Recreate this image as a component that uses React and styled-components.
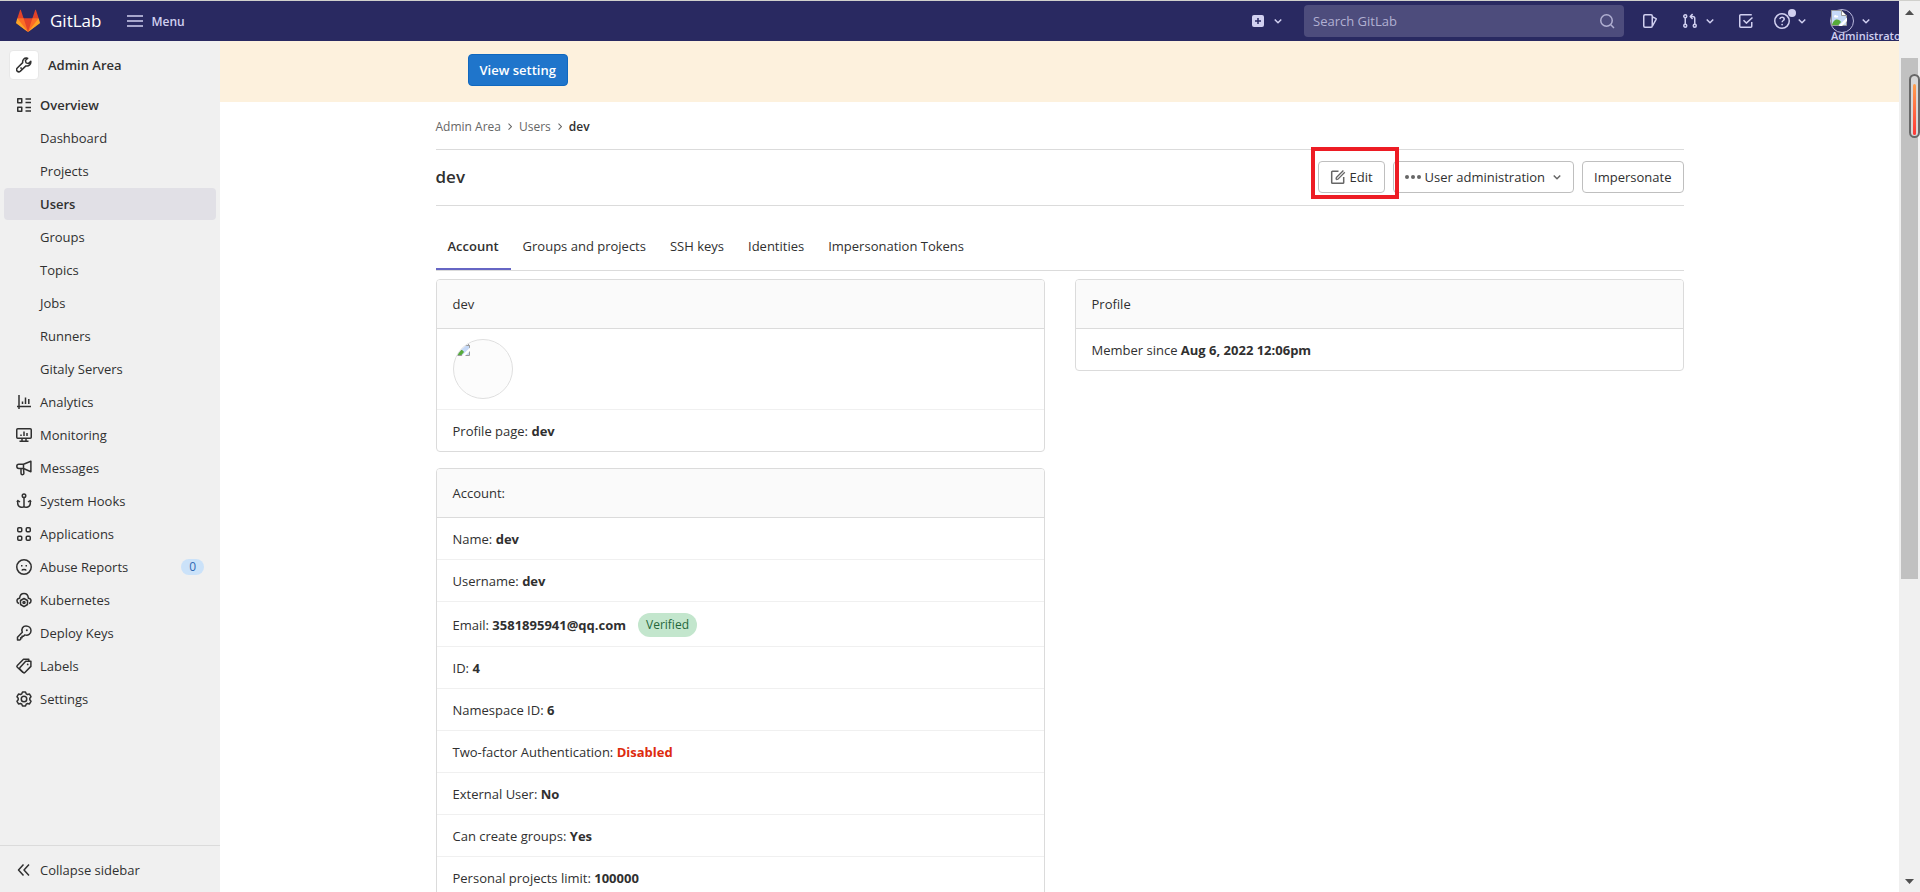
import styled, { createGlobalStyle, css } from 'styled-components';

const GlobalStyle = createGlobalStyle`
	* {
		box-sizing: border-box;
	}

	body {
		margin: 0;
		background: #fff;
		color: #303030;
		font-family: 'Open Sans', 'Noto Sans', sans-serif;
		font-size: 13px;
		line-height: 17px;
	}

	a {
		color: inherit;
		text-decoration: none;
	}

	button, input {
		font: inherit;
	}
`;

const Shell = styled.div`
	display: grid;
	grid-template-columns: minmax(0, 1fr) 21px;
	height: 100vh;
	border-top: 1px solid #d0d0cc;
	overflow: hidden;
`;

const Page = styled.div`
	display: flex;
	flex-direction: column;
	min-height: 0;
`;

const TopBar = styled.header`
	flex: none;
	display: flex;
	align-items: center;
	gap: 18px;
	height: 40px;
	padding: 0 25px 0 16px;
	background: #292961;
	color: #d1d0f0;
	overflow: hidden;
`;

const Brand = styled.a`
	display: flex;
	align-items: center;
	gap: 10px;
	color: #fff;
	font-size: 17px;
	line-height: 24px;
`;

const plainButton = css`
	padding: 0;
	border: none;
	background: transparent;
	color: inherit;
	cursor: pointer;
`;

const MenuButton = styled.button`
	${plainButton}
	display: flex;
	align-items: center;
	gap: 8px;
	margin: 0 auto 0 8px;
	font-size: 12px;
	font-weight: 600;
`;

const NavButton = styled.button`
	${plainButton}
	position: relative;
	display: flex;
	align-items: center;
	gap: 4px;
`;

const NavLink = styled.a`
	display: flex;
`;

const NavCluster = styled.nav`
	display: flex;
	align-items: center;
	gap: ${({ $gap }) => $gap}px;
`;

const SearchBox = styled.label`
	display: flex;
	align-items: center;
	flex: 0 1 320px;
	height: 32px;
	padding: 0 9px;
	border-radius: 4px;
	background: #4d4c7c;
	color: #b1b0d2;
`;

const SearchInput = styled.input`
	flex: 1;
	min-width: 0;
	padding: 0;
	border: none;
	outline: none;
	background: transparent;
	color: #fff;

	&::placeholder {
		color: #b1b0d2;
		opacity: 1;
	}
`;

const NoticeDot = styled.span`
	position: absolute;
	top: -4px;
	left: 14px;
	width: 8px;
	height: 8px;
	border-radius: 50%;
	background: #d1d0f0;
`;

const SmallAvatar = styled.span`
	display: flex;
	width: 24px;
	height: 24px;
	border: 1px solid #b9b8dc;
	border-radius: 50%;
`;

const AvatarAlt = styled.span`
	position: absolute;
	top: 18px;
	left: 1px;
	font-size: 11px;
	font-weight: 600;
`;

const Body = styled.div`
	flex: 1;
	display: flex;
	min-height: 0;
`;

const SidebarWrapper = styled.aside`
	flex: none;
	display: flex;
	flex-direction: column;
	justify-content: space-between;
	width: 220px;
	background: #f0f0f0;
`;

const SidebarTitle = styled.a`
	display: flex;
	align-items: center;
	gap: 9px;
	padding: 9px;
	font-weight: 600;
`;

const TitleIcon = styled.span`
	display: flex;
	align-items: center;
	justify-content: center;
	width: 30px;
	height: 30px;
	border: 1px solid #e8e8e8;
	border-radius: 4px;
	background: #fff;
`;

const NavList = styled.ul`
	display: flex;
	flex-direction: column;
	gap: 1px;
	margin: 0;
	padding: 0 4px;
	list-style: none;
`;

const NavItem = styled.a`
	display: flex;
	align-items: center;
	gap: 8px;
	height: 32px;
	padding: 0 12px 0 ${({ $sub }) => ($sub ? 36 : 12)}px;
	border-radius: 4px;
	background: ${({ $active }) => ($active ? '#e1e0e6' : 'transparent')};
	font-weight: ${({ $bold }) => ($bold ? 600 : 400)};
`;

const CountBadge = styled.span`
	margin-left: auto;
	padding: 0 8px;
	border-radius: 8px;
	background: #cbe2f9;
	color: #2f68b4;
	font-size: 12px;
	line-height: 16px;
`;

const CollapseButton = styled.button`
	${plainButton}
	display: flex;
	align-items: center;
	gap: 8px;
	height: 47px;
	padding: 2px 16px 0;
	border-top: 1px solid #dbdbdb;
`;

const Main = styled.main`
	flex: 1;
	min-width: 0;
	overflow: hidden;
`;

const Banner = styled.div`
	background: #fdf1dd;
`;

const Container = styled.div`
	max-width: 1280px;
	margin: 0 auto;
	padding: 0 16px;
`;

const BannerActions = styled.div`
	padding: 13px 32px 16px;
`;

const Button = styled.button`
	display: flex;
	align-items: center;
	gap: 4px;
	height: 32px;
	padding: 0 ${({ $caret }) => ($caret ? 8 : 11)}px 0 11px;
	border: 1px solid ${({ $primary }) => ($primary ? '#1068bf' : '#bfbfbf')};
	border-radius: 4px;
	background: ${({ $primary }) => ($primary ? '#1f75cb' : '#fff')};
	color: ${({ $primary }) => ($primary ? '#fff' : '#303030')};
	font-weight: ${({ $primary }) => ($primary ? 600 : 400)};
	white-space: nowrap;
	cursor: pointer;

	svg {
		color: #666;
	}
`;

const Breadcrumbs = styled.nav`
	display: flex;
	align-items: center;
	gap: 3px;
	padding: 17px 0 14px;
	border-bottom: 1px solid #dbdbdb;
	color: #666;
	font-size: 12px;
	line-height: 16px;
`;

const CurrentCrumb = styled.a`
	color: #303030;
	font-weight: 600;
`;

const TitleRow = styled.div`
	display: flex;
	align-items: center;
	justify-content: space-between;
	padding: 11px 0 12px;
	border-bottom: 1px solid #dbdbdb;
`;

const Title = styled.h1`
	margin: 0;
	font-size: 17px;
	line-height: 24px;
	font-weight: 600;
`;

const Actions = styled.div`
	display: flex;
	gap: 8px;
`;

const Marked = styled.div`
	position: relative;
`;

const RedFrame = styled.span`
	position: absolute;
	inset: -14px -14px -6px -7px;
	border: 4px solid #ed1c24;
	pointer-events: none;
	z-index: 1;
`;

const Tabs = styled.nav`
	display: flex;
	margin: 16px 0 8px;
	border-bottom: 1px solid #dbdbdb;
`;

const Tab = styled.a`
	display: flex;
	align-items: center;
	height: 48px;
	padding: 0 12px;
	font-weight: ${({ $active }) => ($active ? 600 : 400)};
	box-shadow: ${({ $active }) => ($active ? 'inset 0 -2px 0 #6666c4' : 'none')};
`;

const Columns = styled.div`
	display: grid;
	grid-template-columns: 1fr 1fr;
	gap: 30px;
`;

const Column = styled.div`
	display: flex;
	flex-direction: column;
	gap: 16px;
`;

const Card = styled.section`
	border: 1px solid #dbdbdb;
	border-radius: 4px;
	overflow: hidden;
`;

const CardHeader = styled.div`
	padding: 16px;
	border-bottom: 1px solid #dbdbdb;
	background: #fafafa;
	line-height: 16px;
`;

const CardRow = styled.div`
	display: flex;
	align-items: center;
	gap: 12px;
	padding: ${({ $media }) => ($media ? '10px 16px' : '13px 16px 11px')};

	& + & {
		border-top: 1px solid #f0f0f0;
	}
`;

const Value = styled.strong`
	color: ${({ $danger }) => ($danger ? '#dd2b0e' : 'inherit')};
	font-weight: 700;
`;

const Verified = styled.span`
	margin: -2px 0;
	padding: 4px 8px;
	border-radius: 12px;
	background: #c3e6cd;
	color: #24663b;
	font-size: 12px;
	line-height: 16px;
`;

const Avatar = styled.div`
	width: 60px;
	height: 60px;
	border: 1px solid #dfdfdf;
	border-radius: 50%;
	background: #fcfcfc;
	overflow: hidden;
`;

const ScrollTrack = styled.div`
	display: flex;
	flex-direction: column;
	align-items: center;
	justify-content: space-between;
	position: relative;
	padding: 9px 0 8px;
	background: #f0f0f0;
`;

const ScrollThumb = styled.div`
	position: absolute;
	top: 57px;
	left: 2px;
	width: 17px;
	height: 521px;
	background: #c1c1c1;
`;

const Gauge = styled.div`
	position: absolute;
	top: 73px;
	right: 0;
	width: 11px;
	height: 64px;
	padding: 8px 2px 1px;
	border: 2px solid #686868;
	border-radius: 6px;
	background: #d8d8d8;
`;

const GaugeFill = styled.div`
	height: 100%;
	border-radius: 2px;
	background: linear-gradient(#ffa04d, #ff3838);
`;

const icons = {
	hamburger: <path d="M0 3h16M0 8h16M0 13h16" />,
	chevron: <path d="M4.75 6.5 8 9.75l3.25-3.25" />,
	chevronRight: <path d="m6 3.5 4 4-4 4" strokeWidth="1.4" />,
	plus: (
		<>
			<rect x="2" y="2" width="12" height="12" rx="2" fill="currentColor" stroke="none" />
			<path d="M8 5v6M5 8h6" stroke="#292961" />
		</>
	),
	search: (
		<>
			<circle cx="7.5" cy="7.5" r="5.75" />
			<path d="m11.8 11.8 3.2 3.2" />
		</>
	),
	issues: (
		<>
			<rect x="1.75" y="1.75" width="8.5" height="12.5" rx="1.2" />
			<path d="m10.5 4 3.2 1.4c.5.2.6.6.4 1L10.5 13" />
		</>
	),
	merge: (
		<>
			<circle cx="3.25" cy="3.25" r="1.5" />
			<circle cx="3.25" cy="12.75" r="1.5" />
			<circle cx="12.75" cy="12.75" r="1.5" />
			<path d="M3.25 5v6M12.75 11V5.5c0-1.2-.8-2-2-2H8.5M10.6 1 8.2 3.5 10.6 6" />
		</>
	),
	todo: (
		<>
			<path d="M13.75 9v4.25a1 1 0 0 1-1 1h-10a1 1 0 0 1-1-1V2.75a1 1 0 0 1 1-1h11" />
			<path d="m5.5 7.2 2.8 2.9 6.2-5.6" />
		</>
	),
	help: (
		<>
			<circle cx="8" cy="8" r="7.25" />
			<path d="M5.8 6.2C6 4.9 6.8 4.3 8 4.3c1.3 0 2.2.7 2.2 1.9 0 1.300-2.100 1.400-2.100 3.100" />
			<circle cx="8.1" cy="11.6" r=".9" fill="currentColor" stroke="none" />
		</>
	),
	wrench: (
		<path d="M10.9 1.1C8.3.6 6.2 2.9 6.7 5.6L1.300 11c-.9.9-.9 2.300-.1 3.100s2.300.8 3.200 0L9.900 8.900c2.900.7 5.300-1.500 4.900-4.600l-2.400 2.300-2.300-.7-.7-2.300 2.300-2.400ZM4.500 10.500l1.100 1.100" />
	),
	overview: (
		<>
			<rect x="1.75" y="1.75" width="4" height="4" />
			<rect x="1.75" y="10.25" width="4" height="4" />
			<path d="M9.5 2H15M9.5 5.5H15M9.5 10.5H15M9.5 14H15" />
		</>
	),
	analytics: <path d="M3 1v14M1 12.5h14M6.5 10V7.5M9.5 10V3.5M12.8 10V5" />,
	monitor: (
		<>
			<rect x=".75" y="1.75" width="14.5" height="9.5" rx="1" />
			<path d="M5 9V7.500M8 9V4.500M11 9V6M6 11.500V14M10 11.500V14M3.500 14.250h9" />
		</>
	),
	megaphone: (
		<>
			<path d="M14.9 1.300 7.500 4.300H2.800C1.600 4.300.8 5.100.8 6.300S1.600 8.500 2.800 8.500h4.700l7.400 3.200ZM7.500 4.300v4.200" />
			<path d="M5 8.700v4.500c0 .8.600 1.500 1.500 1.500s1.400-.6 1.400-1.400L7.500 8.700" />
		</>
	),
	anchor: (
		<>
			<circle cx="8" cy="2.75" r="1.75" />
			<path d="M8 4.500v9.300M1.700 7.500v2.700c0 4 4.700 5 6.300 3.300 1.600 1.700 6.300.7 6.300-3.300V7.500M1 9l.8-1.500L4 9M15 9l-.8-1.500L12 9" />
		</>
	),
	apps: (
		<>
			<rect x="1.75" y="1.75" width="4" height="4" rx="1" />
			<rect x="10.25" y="1.75" width="4" height="4" rx="1" />
			<rect x="1.75" y="10.25" width="4" height="4" rx="1" />
			<rect x="10.25" y="10.25" width="4" height="4" rx="1" />
		</>
	),
	sad: (
		<>
			<circle cx="8" cy="8" r="7.25" />
			<path d="M5.8 11.500c.6-1.300 3.800-1.300 4.400 0" />
			<path d="M5 6.750h1.500M9.500 6.750H11" />
		</>
	),
	cloudGear: (
		<>
			<path d="M3 11.500C.3 10.500.1 6.800 3.600 6.300 3.900 3.300 5.500 1.500 8 1.500s4.100 1.800 4.400 4.800c3.500.5 3.300 4.200.6 5.200" />
			<path d="m8 6.500 3.500 2v4L8 14.700l-3.500-2.200v-4Z" />
			<circle cx="8" cy="10.5" r="1" />
		</>
	),
	key: (
		<>
			<path d="M6.300 7.300C5 3.600 7 1 10 1c2.900 0 5 2.100 5 4.800 0 3.200-2.900 5.200-6.200 4.100l-1.300 1.300H6v1.500H4.700v1.500l-.9.800H1.500v-2.800Z" />
			<circle cx="10.8" cy="5.2" r="1" fill="currentColor" stroke="none" />
		</>
	),
	labels: (
		<>
			<path d="m7 14.500-5.700-5.300c-.6-.5-.6-1.200 0-1.700L7.500 1.300h5.300V3" />
			<path d="M9.700 3.200h5.200v5.200l-6 6.100c-.5.500-1.100.5-1.600 0L4 11.200c-.5-.5-.5-1.100 0-1.600Z" />
			<circle cx="11.7" cy="6.4" r=".9" fill="currentColor" stroke="none" />
		</>
	),
	settings: (
		<>
			<path d="M6.500 1h3l.7 1.800 1.300.7 2-.4 1.500 2.600L13.800 7.200v1.600l1.200 1.500-1.500 2.600-2-.4-1.300.7L9.500 15h-3l-.7-1.800-1.300-.7-2 .4L1 10.300l1.200-1.500V7.200L1 5.700l1.500-2.600 2 .4 1.300-.7Z" />
			<circle cx="8" cy="8" r="2.75" />
		</>
	),
	collapse: <path d="M7.500 2.500 2.500 8l5 5.500M13 2.500 8 8l5 5.500" />,
	edit: (
		<>
			<path d="M8.500 2.250h-6a.8.8 0 0 0-.8.8v10.400c0 .4.4.8.8.8h10.400c.5 0 .8-.4.8-.8V8" />
			<path d="m6 10.500.4-2 7-7M6 10.500l2-.4 6.800-6.800" strokeWidth="1.3" />
		</>
	),
	dots: (
		<g fill="currentColor" stroke="none">
			<circle cx="2" cy="8" r="2" />
			<circle cx="8" cy="8" r="2" />
			<circle cx="14" cy="8" r="2" />
		</g>
	),
};

const Icon = ({ name, size = 16 }) => (
	<svg
		width={size}
		height={size}
		viewBox="0 0 16 16"
		fill="none"
		stroke="currentColor"
		strokeWidth="1.5"
		strokeLinejoin="round"
		aria-hidden="true"
	>
		{icons[name]}
	</svg>
);

const Tanuki = () => (
	<svg width="24" height="24" viewBox="0 0 36 36" aria-hidden="true">
		<path fill="#e24329" d="m2 14 9.380 9v-9l-4-12.280c-.205-.632-1.176-.632-1.380 0z" />
		<path fill="#e24329" d="m34 14-9.380 9v-9l4-12.280c.205-.632 1.176-.632 1.380 0z" />
		<path fill="#e24329" d="M18 34.380 3 14h30z" />
		<path fill="#fc6d26" d="M18 34.380 11.380 14H2l4 11z" />
		<path fill="#fc6d26" d="M18 34.380 24.620 14H34l-4 11z" />
		<path fill="#fca326" d="M2 14 .1 20.160c-.18.565 0 1.200.5 1.560l17.420 12.660z" />
		<path fill="#fca326" d="m34 14 1.900 6.160c.18.565 0 1.200-.5 1.560L18 34.380z" />
	</svg>
);

const BrokenImage = () => (
	<svg width="16" height="16" viewBox="0 0 16 16" aria-hidden="true">
		<path d="M.5.500h10l5 5v10H.500z" fill="#c6d9f7" stroke="#9a9a9a" />
		<path d="M10.500.500v5h5z" fill="#fff" stroke="#9a9a9a" />
		<path d="M3 6.500c0-1.500 2-2 2.500-.8C7 5.200 8 7 6.500 7.500H3.500Z" fill="#fff" />
		<path d="M1 15c1-4 3-5.500 5-5.500s3 1 4 2.500L7.500 15Z" fill="#57ab3a" />
		<path d="M7.500 16 16 7.500V11l-5 5Z" fill="#fff" />
	</svg>
);

const navItems = [
	{ label: 'Overview', icon: 'overview', bold: true },
	{ label: 'Dashboard', sub: true },
	{ label: 'Projects', sub: true },
	{ label: 'Users', sub: true, bold: true, active: true },
	{ label: 'Groups', sub: true },
	{ label: 'Topics', sub: true },
	{ label: 'Jobs', sub: true },
	{ label: 'Runners', sub: true },
	{ label: 'Gitaly Servers', sub: true },
	{ label: 'Analytics', icon: 'analytics' },
	{ label: 'Monitoring', icon: 'monitor' },
	{ label: 'Messages', icon: 'megaphone' },
	{ label: 'System Hooks', icon: 'anchor' },
	{ label: 'Applications', icon: 'apps' },
	{ label: 'Abuse Reports', icon: 'sad', count: 0 },
	{ label: 'Kubernetes', icon: 'cloudGear' },
	{ label: 'Deploy Keys', icon: 'key' },
	{ label: 'Labels', icon: 'labels' },
	{ label: 'Settings', icon: 'settings' },
];

const tabs = ['Account', 'Groups and projects', 'SSH keys', 'Identities', 'Impersonation Tokens'];

const accountRows = [
	{ label: 'Name:', value: 'dev' },
	{ label: 'Username:', value: 'dev' },
	{ label: 'Email:', value: '3581895941@qq.com', verified: true },
	{ label: 'ID:', value: '4' },
	{ label: 'Namespace ID:', value: '6' },
	{ label: 'Two-factor Authentication:', value: 'Disabled', danger: true },
	{ label: 'External User:', value: 'No' },
	{ label: 'Can create groups:', value: 'Yes' },
	{ label: 'Personal projects limit:', value: '100000' },
];

const Header = () => (
	<TopBar>
		<Brand href="#">
			<Tanuki />
			GitLab
		</Brand>
		<MenuButton>
			<Icon name="hamburger" />
			Menu
		</MenuButton>
		<NavButton aria-label="Create new">
			<Icon name="plus" />
			<Icon name="chevron" />
		</NavButton>
		<SearchBox>
			<SearchInput type="text" placeholder="Search GitLab" aria-label="Search GitLab" />
			<Icon name="search" />
		</SearchBox>
		<NavCluster $gap={20}>
			<NavCluster $gap={24}>
				<NavLink href="#" aria-label="Issues">
					<Icon name="issues" />
				</NavLink>
				<NavButton aria-label="Merge requests">
					<Icon name="merge" />
					<Icon name="chevron" />
				</NavButton>
			</NavCluster>
			<NavLink href="#" aria-label="To-Do List">
				<Icon name="todo" />
			</NavLink>
			<NavButton aria-label="Help">
				<Icon name="help" />
				<NoticeDot />
				<Icon name="chevron" />
			</NavButton>
			<NavButton>
				<SmallAvatar>
					<BrokenImage />
				</SmallAvatar>
				<AvatarAlt>Administrator</AvatarAlt>
				<Icon name="chevron" />
			</NavButton>
		</NavCluster>
	</TopBar>
);

const Sidebar = () => (
	<SidebarWrapper>
		<div>
			<SidebarTitle href="#">
				<TitleIcon>
					<Icon name="wrench" />
				</TitleIcon>
				Admin Area
			</SidebarTitle>
			<NavList>
				{navItems.map(({ label, icon, sub, bold, active, count }) => (
					<li key={label}>
						<NavItem href="#" $sub={sub} $bold={bold} $active={active}>
							{icon && <Icon name={icon} />}
							{label}
							{count !== undefined && <CountBadge>{count}</CountBadge>}
						</NavItem>
					</li>
				))}
			</NavList>
		</div>
		<CollapseButton>
			<Icon name="collapse" />
			Collapse sidebar
		</CollapseButton>
	</SidebarWrapper>
);

const UserCards = () => (
	<Columns>
		<Column>
			<Card>
				<CardHeader>dev</CardHeader>
				<CardRow $media>
					<Avatar>
						<BrokenImage />
					</Avatar>
				</CardRow>
				<CardRow>
					<span>
						Profile page: <Value as="a" href="#">dev</Value>
					</span>
				</CardRow>
			</Card>
			<Card>
				<CardHeader>Account:</CardHeader>
				{accountRows.map(({ label, value, danger, verified }) => (
					<CardRow key={label}>
						<span>
							{label} <Value $danger={danger}>{value}</Value>
						</span>
						{verified && <Verified>Verified</Verified>}
					</CardRow>
				))}
			</Card>
		</Column>
		<Column>
			<Card>
				<CardHeader>Profile</CardHeader>
				<CardRow>
					<span>
						Member since <Value>Aug 6, 2022 12:06pm</Value>
					</span>
				</CardRow>
			</Card>
		</Column>
	</Columns>
);

const Scrollbar = () => (
	<ScrollTrack aria-hidden="true">
		<svg width="9" height="5" viewBox="0 0 9 5">
			<path d="M0 5 4.500 0 9 5z" fill="#505050" />
		</svg>
		<ScrollThumb />
		<Gauge>
			<GaugeFill />
		</Gauge>
		<svg width="9" height="5" viewBox="0 0 9 5">
			<path d="M0 0h9L4.500 5z" fill="#505050" />
		</svg>
	</ScrollTrack>
);

export default function App() {
	return (
		<Shell>
			<GlobalStyle />
			<Page>
				<Header />
				<Body>
					<Sidebar />
					<Main>
						<Banner>
							<Container>
								<BannerActions>
									<Button $primary>View setting</Button>
								</BannerActions>
							</Container>
						</Banner>
						<Container>
							<Breadcrumbs aria-label="Breadcrumbs">
								<a href="#">Admin Area</a>
								<Icon name="chevronRight" size={12} />
								<a href="#">Users</a>
								<Icon name="chevronRight" size={12} />
								<CurrentCrumb href="#">dev</CurrentCrumb>
							</Breadcrumbs>
							<TitleRow>
								<Title>dev</Title>
								<Actions>
									<Marked>
										<Button>
											<Icon name="edit" />
											Edit
										</Button>
										<RedFrame />
									</Marked>
									<Button $caret>
										<Icon name="dots" />
										User administration
										<Icon name="chevron" />
									</Button>
									<Button>Impersonate</Button>
								</Actions>
							</TitleRow>
							<Tabs>
								{tabs.map((tab, index) => (
									<Tab key={tab} href="#" $active={index === 0}>
										{tab}
									</Tab>
								))}
							</Tabs>
							<UserCards />
						</Container>
					</Main>
				</Body>
			</Page>
			<Scrollbar />
		</Shell>
	);
}
